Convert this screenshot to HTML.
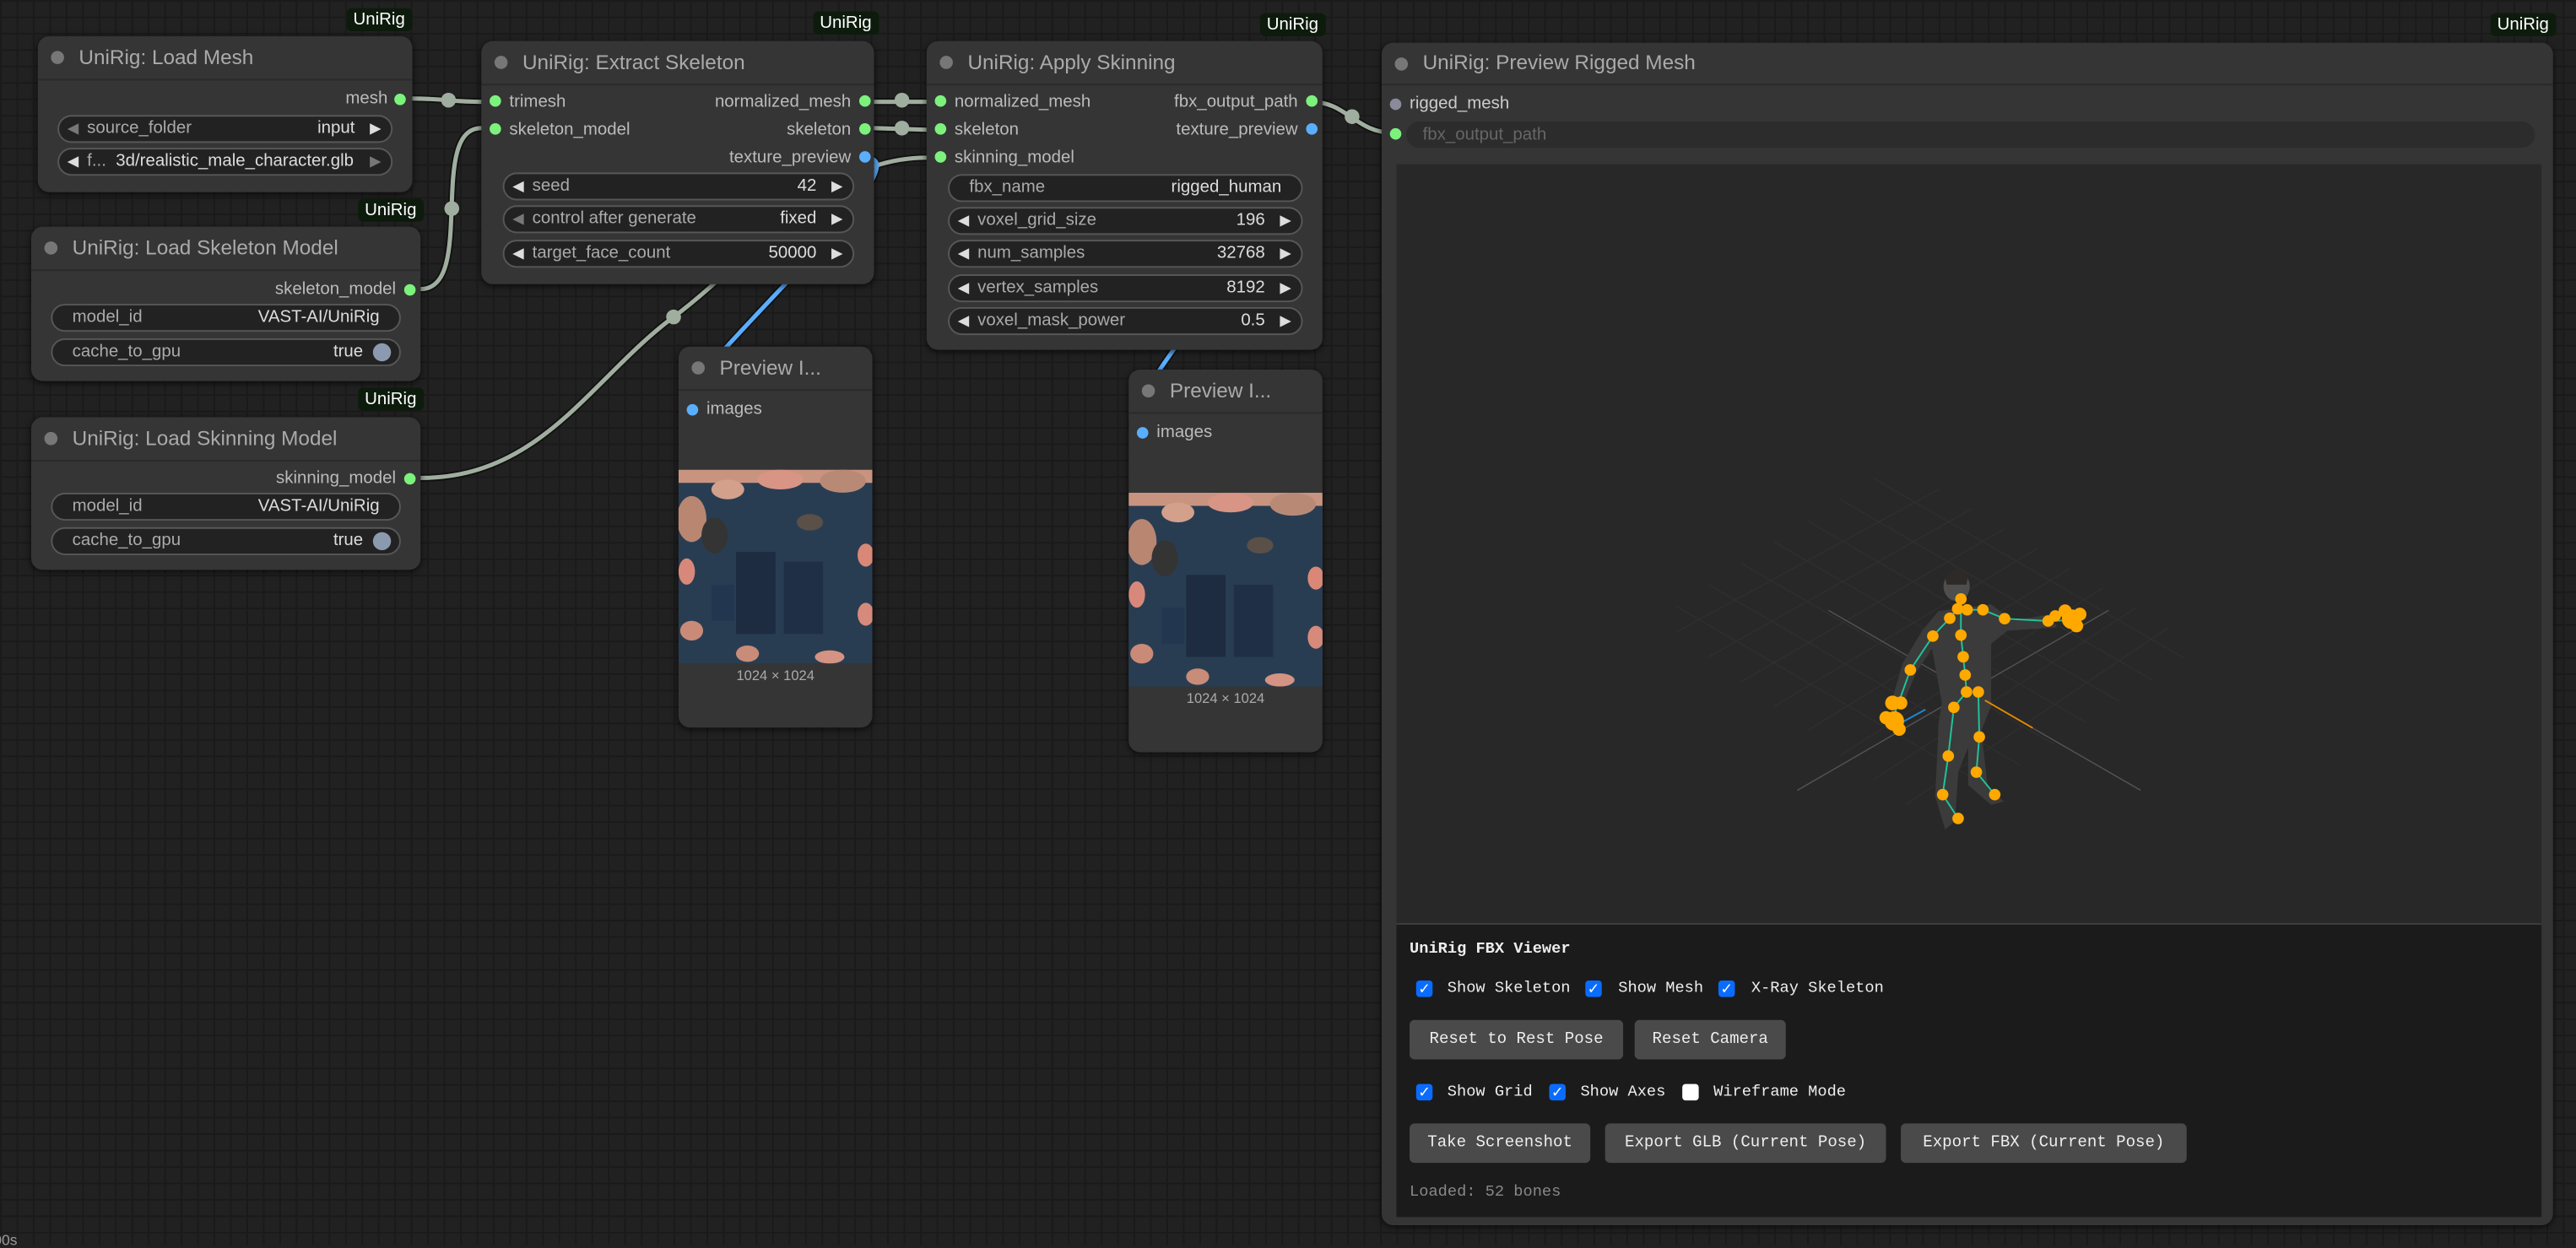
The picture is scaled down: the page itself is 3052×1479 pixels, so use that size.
<!DOCTYPE html>
<html><head><meta charset="utf-8">
<style>
html,body{margin:0;padding:0;width:3052px;height:1476px;overflow:hidden;background:#212121}
#w{position:absolute;left:0;top:0;width:1568px;height:758px;transform:scale(1.94643);transform-origin:0 0;
background-color:#212121;
background-image:linear-gradient(#1a1a1a 1px,transparent 1px),linear-gradient(90deg,#1a1a1a 1px,transparent 1px);
background-size:10px 10px;font-family:"Liberation Sans",Arial,sans-serif}
.n{position:absolute;background:#353535;border-radius:7px;box-shadow:0 1px 4px #000a}
.t{height:26px;border-bottom:1px solid #2a2a2a;color:#aaa;font-size:12.5px;line-height:26px;padding-left:25px;position:relative;white-space:nowrap;overflow:hidden}
.t:before{content:"";position:absolute;left:8px;top:9px;width:8px;height:8px;border-radius:50%;background:#777}
.bd{position:absolute;background:#0d1b0d;color:#fff;font-size:10.5px;line-height:14px;padding:0 4px;border-radius:3px}
.s{position:absolute;font-size:10.5px;color:#bbb;line-height:14px;white-space:nowrap}
.r{text-align:right}
.d{position:absolute;width:7px;height:7px;border-radius:50%;background:#7cf27c}
.bl{background:#5aaeff}
.w{position:absolute;height:15px;border:1px solid #575757;border-radius:9px;background:#222;font-size:10.5px;color:#aaa;line-height:15px;white-space:nowrap}
.w .l{position:absolute;left:17px}
.w .v{position:absolute;right:22px;color:#ddd}
.w .a1{position:absolute;left:5px;color:#ddd;font-size:9px}
.w .a2{position:absolute;right:6px;color:#ddd;font-size:9px}
.dim{color:#777!important}
.tog{position:absolute;right:5px;top:2px;width:11px;height:11px;border-radius:50%;background:#8c9ab0}
.img{position:absolute;left:0;width:118px;height:118px}
.cap{position:absolute;left:0;width:118px;text-align:center;font-size:8.5px;color:#aaa}
.p{position:absolute;font-family:"Liberation Mono",monospace;font-size:9.6px;color:#eee;white-space:nowrap;line-height:12px}
.cb{position:absolute;width:10px;height:10px;border-radius:2px;background:#0a6cff;color:#fff;font-size:9px;line-height:10px;text-align:center}
.cb.u{background:#fff}
.btn{position:absolute;height:24px;background:#4a4a4a;border-radius:3px;font-family:"Liberation Mono",monospace;font-size:9.8px;color:#eee;line-height:24px;text-align:center;white-space:nowrap}
</style></head><body><div id="w">

<svg style="position:absolute;left:0;top:0" width="1568" height="758">
<g fill="none" stroke-linecap="round">
<g stroke="#111" stroke-width="4.5">
<path d="M251,60 C270,60 275,62 293,62"/>
<path d="M256,176 C290,176 260,78 293,78"/>
<path d="M256,291 C330,291 360,230 410,193 S500,96 564,96"/>
<path d="M532,62 L564,62"/><path d="M532,78 L564,79"/>
<path d="M527,96 C570,96 390,249 420,249"/>
<path d="M798,79 C830,79 660,263 693,263"/>
<path d="M798,62 C820,62 825,81 849,81"/>
</g>
<g stroke="#a0ae9f" stroke-width="2.6">
<path d="M251,60 C270,60 275,62 293,62"/>
<path d="M256,176 C290,176 260,78 293,78"/>
<path d="M256,291 C330,291 360,230 410,193 S500,96 564,96"/>
<path d="M532,62 L564,62"/><path d="M532,78 L564,79"/>
<path d="M798,62 C820,62 825,81 849,81"/>
</g>
<g stroke="#5aaeff" stroke-width="2.6">
<path d="M527,96 C570,96 390,249 420,249"/>
<path d="M798,79 C830,79 660,263 693,263"/>
</g>
</g>
<g fill="#a0ae9f"><circle cx="273" cy="61" r="4.5"/><circle cx="275" cy="127" r="4.5"/><circle cx="410" cy="193" r="4.5"/><circle cx="549" cy="61" r="4.5"/><circle cx="549" cy="78" r="4.5"/><circle cx="823" cy="71" r="4.5"/></g>
</svg>

<!-- Load Mesh -->
<div class="bd" style="left:211px;top:5px">UniRig</div>
<div class="n" style="left:23px;top:22px;width:228px;height:95px">
<div class="t">UniRig: Load Mesh</div>
<div class="s r" style="right:15px;top:31px">mesh</div><div class="d" style="left:217px;top:35px"></div>
<div class="w" style="left:12px;top:48px;width:202px"><span class="a1 dim">◀</span><span class="l">source_folder</span><span class="v">input</span><span class="a2">▶</span></div>
<div class="w" style="left:12px;top:68px;width:202px"><span class="a1">◀</span><span class="l">f...&nbsp; <span style="color:#ddd">3d/realistic_male_character.glb</span></span><span class="a2 dim">▶</span></div>
</div>

<!-- Load Skeleton Model -->
<div class="bd" style="left:218px;top:121px">UniRig</div>
<div class="n" style="left:19px;top:138px;width:237px;height:94px">
<div class="t">UniRig: Load Skeleton Model</div>
<div class="s r" style="right:15px;top:31px">skeleton_model</div><div class="d" style="left:227px;top:35px"></div>
<div class="w" style="left:12px;top:47px;width:211px"><span class="l" style="left:12px">model_id</span><span class="v" style="right:12px">VAST-AI/UniRig</span></div>
<div class="w" style="left:12px;top:68px;width:211px"><span class="l" style="left:12px">cache_to_gpu</span><span class="v">true</span><span class="tog"></span></div>
</div>

<!-- Load Skinning Model -->
<div class="bd" style="left:218px;top:236px">UniRig</div>
<div class="n" style="left:19px;top:254px;width:237px;height:93px">
<div class="t">UniRig: Load Skinning Model</div>
<div class="s r" style="right:15px;top:30px">skinning_model</div><div class="d" style="left:227px;top:34px"></div>
<div class="w" style="left:12px;top:46px;width:211px"><span class="l" style="left:12px">model_id</span><span class="v" style="right:12px">VAST-AI/UniRig</span></div>
<div class="w" style="left:12px;top:67px;width:211px"><span class="l" style="left:12px">cache_to_gpu</span><span class="v">true</span><span class="tog"></span></div>
</div>

<!-- Extract Skeleton -->
<div class="bd" style="left:495px;top:7px">UniRig</div>
<div class="n" style="left:293px;top:25px;width:239px;height:148px">
<div class="t">UniRig: Extract Skeleton</div>
<div class="d" style="left:5px;top:33px"></div><div class="s" style="left:17px;top:30px">trimesh</div>
<div class="d" style="left:5px;top:50px"></div><div class="s" style="left:17px;top:47px">skeleton_model</div>
<div class="s r" style="right:14px;top:30px">normalized_mesh</div><div class="d" style="left:230px;top:33px"></div>
<div class="s r" style="right:14px;top:47px">skeleton</div><div class="d" style="left:230px;top:50px"></div>
<div class="s r" style="right:14px;top:64px">texture_preview</div><div class="d bl" style="left:230px;top:67px"></div>
<div class="w" style="left:13px;top:80px;width:212px"><span class="a1">◀</span><span class="l">seed</span><span class="v">42</span><span class="a2">▶</span></div>
<div class="w" style="left:13px;top:100px;width:212px"><span class="a1 dim">◀</span><span class="l">control after generate</span><span class="v">fixed</span><span class="a2">▶</span></div>
<div class="w" style="left:13px;top:121px;width:212px"><span class="a1">◀</span><span class="l">target_face_count</span><span class="v">50000</span><span class="a2">▶</span></div>
</div>

<!-- Apply Skinning -->
<div class="bd" style="left:767px;top:8px">UniRig</div>
<div class="n" style="left:564px;top:25px;width:241px;height:188px">
<div class="t">UniRig: Apply Skinning</div>
<div class="d" style="left:5px;top:33px"></div><div class="s" style="left:17px;top:30px">normalized_mesh</div>
<div class="d" style="left:5px;top:50px"></div><div class="s" style="left:17px;top:47px">skeleton</div>
<div class="d" style="left:5px;top:67px"></div><div class="s" style="left:17px;top:64px">skinning_model</div>
<div class="s r" style="right:15px;top:30px">fbx_output_path</div><div class="d" style="left:231px;top:33px"></div>
<div class="s r" style="right:15px;top:47px">texture_preview</div><div class="d bl" style="left:231px;top:50px"></div>
<div class="w" style="left:13px;top:81px;width:214px"><span class="l" style="left:12px">fbx_name</span><span class="v" style="right:12px">rigged_human</span></div>
<div class="w" style="left:13px;top:101px;width:214px"><span class="a1">◀</span><span class="l">voxel_grid_size</span><span class="v">196</span><span class="a2">▶</span></div>
<div class="w" style="left:13px;top:121px;width:214px"><span class="a1">◀</span><span class="l">num_samples</span><span class="v">32768</span><span class="a2">▶</span></div>
<div class="w" style="left:13px;top:142px;width:214px"><span class="a1">◀</span><span class="l">vertex_samples</span><span class="v">8192</span><span class="a2">▶</span></div>
<div class="w" style="left:13px;top:162px;width:214px"><span class="a1">◀</span><span class="l">voxel_mask_power</span><span class="v">0.5</span><span class="a2">▶</span></div>
</div>

<svg width="0" height="0" style="position:absolute"><defs>
<g id="tex">
<rect width="118" height="118" fill="#293d52"/>
<rect width="118" height="8" fill="#c89480"/>
<ellipse cx="8" cy="30" rx="9" ry="14" fill="#b98672"/>
<ellipse cx="30" cy="12" rx="10" ry="6" fill="#d3a08c"/>
<ellipse cx="62" cy="6" rx="14" ry="6" fill="#d89484"/>
<ellipse cx="100" cy="7" rx="14" ry="7" fill="#b88a76"/>
<ellipse cx="22" cy="40" rx="8" ry="11" fill="#343434"/>
<ellipse cx="80" cy="32" rx="8" ry="5" fill="#5a5048"/>
<ellipse cx="5" cy="62" rx="5" ry="8" fill="#d8887a"/>
<ellipse cx="114" cy="52" rx="5" ry="7" fill="#d98878"/>
<ellipse cx="114" cy="88" rx="5" ry="7" fill="#d68a7c"/>
<ellipse cx="8" cy="98" rx="7" ry="6" fill="#c98a78"/>
<ellipse cx="42" cy="112" rx="7" ry="5" fill="#c98c78"/>
<ellipse cx="92" cy="114" rx="9" ry="4" fill="#d49383"/>
<rect x="35" y="50" width="24" height="50" fill="#1d2c40"/>
<rect x="64" y="56" width="24" height="44" fill="#1f3046"/>
<rect x="20" y="70" width="14" height="22" fill="#233650"/>
</g></defs></svg>

<!-- Preview 1 -->
<div class="n" style="left:413px;top:211px;width:118px;height:232px">
<div class="t">Preview I...</div>
<div class="d bl" style="left:5px;top:35px"></div><div class="s" style="left:17px;top:31px">images</div>
<svg class="img" style="top:75px" viewBox="0 0 118 118"><use href="#tex"/></svg>
<div class="cap" style="top:195px">1024 × 1024</div>
</div>

<!-- Preview 2 -->
<div class="n" style="left:687px;top:225px;width:118px;height:233px">
<div class="t">Preview I...</div>
<div class="d bl" style="left:5px;top:35px"></div><div class="s" style="left:17px;top:31px">images</div>
<svg class="img" style="top:75px" viewBox="0 0 118 118"><use href="#tex"/></svg>
<div class="cap" style="top:195px">1024 × 1024</div>
</div>

<!-- Preview Rigged Mesh -->
<div class="bd" style="left:1516px;top:8px">UniRig</div>
<div class="n" style="left:841px;top:26px;width:713px;height:720px">
<div class="t" style="height:25px;line-height:25px">UniRig: Preview Rigged Mesh</div>
<div class="d" style="left:5px;top:34px;background:#8a8a9a"></div><div class="s" style="left:17px;top:30px;color:#ccc">rigged_mesh</div>
<div class="d" style="left:5px;top:52px"></div>
<div style="position:absolute;left:15px;top:48px;width:687px;height:16px;border-radius:8px;background:#2c2c2c;font-size:10.5px;color:#666;line-height:16px;padding-left:10px;box-sizing:border-box">fbx_output_path</div>
<div style="position:absolute;left:9px;top:74px;width:697px;height:462px;background:#282828;overflow:hidden">
<svg width="697" height="462" viewBox="850 100 697 462" style="position:absolute;left:0;top:0">
<g stroke="#303030" stroke-width="0.6">
<path d="M1040,400 L1200,310 M1060,415 L1220,322 M1080,430 L1240,334 M1100,445 L1260,346 M1120,460 L1280,358 M1140,475 L1300,370 M1160,490 L1320,382 M1020,385 L1180,298"/>
<path d="M1080,330 L1270,440 M1060,343 L1250,453 M1040,356 L1230,466 M1100,317 L1290,427 M1120,304 L1310,414 M1140,291 L1330,401 M1020,369 L1210,479"/>
</g>
<g stroke="#555" stroke-width="0.7"><path d="M1113,371.6 L1303,481.2"/><path d="M1094,481.2 L1283.5,371.6"/></g>
<g fill="#3b3b3b">
<path d="M1180,372 L1212,368 L1225,378 L1248,374 L1252,382 L1222,384 L1212,392 L1212,430 L1206,445 L1210,480 L1220,488 L1212,490 L1198,478 L1198,455 L1192,470 L1190,500 L1184,505 L1178,485 L1180,440 L1182,428 L1176,395 L1166,410 L1158,430 L1150,432 L1158,404 L1170,384 Z"/>
</g>
<ellipse cx="1191" cy="357" rx="8" ry="9" fill="#4e4e4e"/>
<path d="M1184,352 Q1190,343 1198,350 L1197,356 L1185,356 Z" fill="#2e2a28"/>
<g stroke="#20c49a" stroke-width="1" fill="none">
<path d="M1193.6,364.7 L1193.6,386.7 L1195,399.9 L1196.2,411 L1197,421.3 L1189.3,430.7 L1185.9,460.3 L1182.5,483.8 L1191.9,498.3"/>
<path d="M1204.2,421.3 L1204.8,448.7 L1203,470.1 L1214.2,483.8"/>
<path d="M1191.6,370.7 L1186.8,376.4 L1176.5,387.3 L1162.8,407.9 L1152.5,436.7"/>
<path d="M1197.4,371.3 L1207,371.3 L1220.2,376.7 L1246.7,378.1 L1261.3,377.6"/>
</g>
<path d="M1150,444 L1172,432" stroke="#1e88d0" stroke-width="1"/>
<path d="M1208.2,426.4 L1237.3,443.2" stroke="#e08a00" stroke-width="1"/>
<g fill="#ffa800">
<circle cx="1193.6" cy="364.7" r="3.5"/><circle cx="1191.6" cy="370.7" r="3.5"/><circle cx="1197.4" cy="371.3" r="3.5"/><circle cx="1207" cy="371.3" r="3.5"/><circle cx="1186.8" cy="376.4" r="3.5"/><circle cx="1193.6" cy="386.7" r="3.5"/><circle cx="1220.2" cy="376.7" r="3.5"/><circle cx="1176.5" cy="387.3" r="3.5"/><circle cx="1195" cy="399.9" r="3.5"/><circle cx="1196.2" cy="411" r="3.5"/><circle cx="1197" cy="421.3" r="3.5"/><circle cx="1204.2" cy="421.3" r="3.5"/><circle cx="1189.3" cy="430.7" r="3.5"/><circle cx="1162.8" cy="407.9" r="3.5"/><circle cx="1204.8" cy="448.7" r="3.5"/><circle cx="1185.9" cy="460.3" r="3.5"/><circle cx="1203" cy="470.1" r="3.5"/><circle cx="1182.5" cy="483.8" r="3.5"/><circle cx="1214.2" cy="483.8" r="3.5"/><circle cx="1191.9" cy="498.3" r="3.5"/><circle cx="1246.7" cy="378.1" r="3.5"/><circle cx="1251" cy="375" r="3.5"/>
<circle cx="1261" cy="377" r="6"/><circle cx="1257" cy="372" r="4"/><circle cx="1264" cy="381" r="4"/><circle cx="1266" cy="374" r="4"/>
<circle cx="1153" cy="439" r="6"/><circle cx="1152" cy="428" r="4.5"/><circle cx="1148" cy="437" r="4"/><circle cx="1156" cy="444" r="4"/><circle cx="1157" cy="428" r="4"/>
</g>
</svg>
</div>
<div style="position:absolute;left:9px;top:536px;width:697px;height:178px;background:#1b1b1b;border-top:1px solid #3e3e3e">
<div class="p" style="left:8px;top:9px;font-weight:bold">UniRig FBX Viewer</div>
<div class="cb" style="left:12px;top:34px">✓</div><div class="p" style="left:31px;top:33px">Show Skeleton</div>
<div class="cb" style="left:115px;top:34px">✓</div><div class="p" style="left:135px;top:33px">Show Mesh</div>
<div class="cb" style="left:196px;top:34px">✓</div><div class="p" style="left:216px;top:33px">X-Ray Skeleton</div>
<div class="btn" style="left:8px;top:58px;width:130px">Reset to Rest Pose</div>
<div class="btn" style="left:145px;top:58px;width:92px">Reset Camera</div>
<div class="cb" style="left:12px;top:97px">✓</div><div class="p" style="left:31px;top:96px">Show Grid</div>
<div class="cb" style="left:93px;top:97px">✓</div><div class="p" style="left:112px;top:96px">Show Axes</div>
<div class="cb u" style="left:174px;top:97px"></div><div class="p" style="left:193px;top:96px">Wireframe Mode</div>
<div class="btn" style="left:8px;top:121px;width:110px">Take Screenshot</div>
<div class="btn" style="left:127px;top:121px;width:171px">Export GLB (Current Pose)</div>
<div class="btn" style="left:307px;top:121px;width:174px">Export FBX (Current Pose)</div>
<div class="p" style="left:8px;top:157px;color:#888">Loaded: 52 bones</div>
</div>
</div>

<div style="position:absolute;left:-4px;top:750px;font-size:9px;color:#999">00s</div>
</div></body></html>
